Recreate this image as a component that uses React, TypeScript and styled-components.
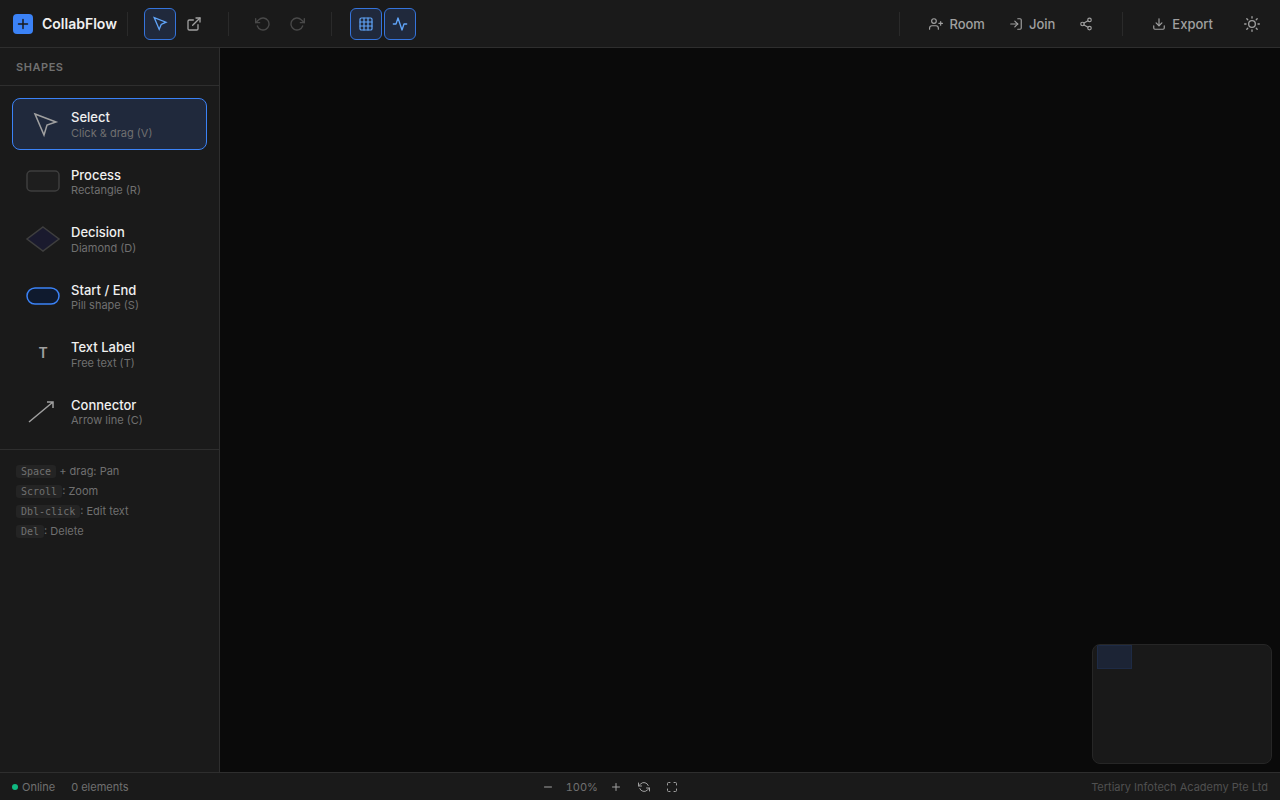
import React from 'react';
import styled, { createGlobalStyle } from 'styled-components';
import {
  FiActivity,
  FiDownload,
  FiExternalLink,
  FiLogIn,
  FiMaximize,
  FiMinus,
  FiPlus,
  FiRefreshCcw,
  FiRotateCcw,
  FiRotateCw,
  FiShare2,
  FiSun,
  FiUserPlus,
} from 'react-icons/fi';
import { Grid3x3 } from 'lucide-react';

const GlobalStyle = createGlobalStyle`
  *, *::before, *::after { box-sizing: border-box; }
  body {
    margin: 0;
    background: #0a0a0a;
    color: #f0f0f0;
    font-family: Inter, "Liberation Sans", sans-serif;
    font-size: 13px;
    line-height: 1.5;
  }
  button { font: inherit; cursor: pointer; }
  svg { display: block; flex: none; }
`;

const Page = styled.div`
  display: flex;
  flex-direction: column;
  height: 100vh;
`;

const Toolbar = styled.header`
  display: flex;
  align-items: center;
  justify-content: space-between;
  height: 48px;
  padding: 0 12px;
  background: #1a1a1a;
  border-bottom: 1px solid #2e2e2e;
`;

const ToolbarSide = styled.div`
  display: flex;
  align-items: center;
`;

const Brand = styled.div`
  display: flex;
  align-items: center;
  gap: 8px;
  margin-right: 10px;
  font-size: 14px;
  font-weight: 600;
`;

const Divider = styled.div<{ $gap?: number }>`
  width: 1px;
  height: 24px;
  margin-right: ${({ $gap = 18 }) => $gap}px;
  background: #2a2a2a;
`;

const ToolGroup = styled.div<{ $after?: number }>`
  display: flex;
  gap: 2px;
  margin-right: ${({ $after = 18 }) => $after}px;
`;

const ToolButton = styled.button<{ $active?: boolean; $wide?: boolean }>`
  display: flex;
  align-items: center;
  justify-content: center;
  gap: 6px;
  width: ${({ $wide }) => ($wide ? 'auto' : '32px')};
  height: 32px;
  padding: ${({ $wide }) => ($wide ? '0 10px' : '0')};
  border: 1px solid ${({ $active }) => ($active ? '#3574dc' : 'transparent')};
  border-radius: 6px;
  background: ${({ $active }) => ($active ? '#20293c' : 'transparent')};
  color: ${({ $active }) => ($active ? '#60a5fa' : '#a0a0a0')};
  font-weight: 500;
  line-height: 16px;

  &:disabled {
    opacity: 0.35;
    cursor: default;
  }
`;

const Body = styled.div`
  display: flex;
  flex: 1;
  min-height: 0;
`;

const Sidebar = styled.aside`
  flex: none;
  width: 220px;
  overflow: hidden;
  background: #1a1a1a;
  border-right: 1px solid #2e2e2e;
`;

const SidebarTitle = styled.h2`
  margin: 0;
  padding: 11px 16px 10px;
  border-bottom: 1px solid #2e2e2e;
  color: #707070;
  font-size: 11px;
  font-weight: 600;
  line-height: 16px;
  letter-spacing: 0.05em;
`;

const ShapeList = styled.div`
  display: flex;
  flex-direction: column;
  gap: 6px;
  padding: 12px;
`;

const ShapeButton = styled.button<{ $active?: boolean }>`
  display: flex;
  align-items: center;
  gap: 10px;
  padding: 10px 12px;
  border: 1px solid ${({ $active }) => ($active ? '#3b82f6' : 'transparent')};
  border-radius: 8px;
  background: ${({ $active }) => ($active ? '#20293c' : 'transparent')};
  color: #f0f0f0;
  text-align: left;
`;

const ShapeName = styled.span`
  display: block;
  font-weight: 500;
  line-height: 1.35;
`;

const ShapeHint = styled.span`
  display: block;
  color: #707070;
  font-size: 11px;
  line-height: 12px;
`;

const Shortcuts = styled.div`
  padding: 12px 16px;
  border-top: 1px solid #2e2e2e;
  color: #707070;
  font-size: 11px;
  line-height: 1.8;
`;

const Key = styled.kbd`
  padding: 1px 5px;
  border-radius: 3px;
  background: #242424;
  font-family: "DejaVu Sans Mono", monospace;
  font-size: 10px;
`;

const Canvas = styled.main`
  position: relative;
  flex: 1;
  background: #0a0a0a;
`;

const Minimap = styled.div`
  position: absolute;
  right: 8px;
  bottom: 8px;
  width: 180px;
  height: 120px;
  padding: 0 4px;
  overflow: hidden;
  border: 1px solid #262626;
  border-radius: 8px;
  background: #191919;
`;

const MinimapView = styled.div`
  width: 35px;
  height: 24px;
  border: 1px solid #1e2b45;
  background: #1c2435;
`;

const StatusBar = styled.footer`
  display: flex;
  align-items: center;
  justify-content: space-between;
  height: 28px;
  padding: 0 12px;
  background: #1a1a1a;
  border-top: 1px solid #2e2e2e;
  color: #707070;
  font-size: 11px;
  line-height: 16px;
`;

const StatusGroup = styled.div<{ $gap: number }>`
  display: flex;
  align-items: center;
  gap: ${({ $gap }) => $gap}px;
`;

const OnlineDot = styled.span`
  width: 6px;
  height: 6px;
  border-radius: 50%;
  background: #10b981;
`;

const ZoomButton = styled.button`
  display: flex;
  align-items: center;
  justify-content: center;
  width: 24px;
  height: 24px;
  padding: 0;
  border: 0;
  background: transparent;
  color: #a0a0a0;
`;

const ZoomLevel = styled.span`
  width: 36px;
  text-align: center;
  font-variant-numeric: tabular-nums;
`;

const Credit = styled.span`
  color: #505050;
`;

const LogoIcon = () => (
  <svg width="22" height="22" viewBox="0 0 22 22" fill="none">
    <rect x="1" y="1" width="20" height="20" rx="4" fill="#3b82f6" />
    <path d="M6.5 11h9M11 6.5v9" stroke="#1a1a1a" strokeWidth="1.5" strokeLinecap="round" />
  </svg>
);

const CursorIcon = () => (
  <svg width="16" height="16" viewBox="0 0 16 16" fill="none" stroke="currentColor" strokeWidth="1.3">
    <path d="M2.2 1.6L14 6.2 9.2 8.4 7.2 13.4z" />
  </svg>
);

const shapeArt = {
  select: <path d="M10 4l21 8-9 3-3 10z" stroke="#a0a0a0" strokeWidth="1.5" />,
  process: <rect x="2" y="4" width="32" height="20" rx="4" stroke="#3e3e3e" strokeWidth="1.5" fill="#1e1e1e" />,
  decision: <path d="M18 2l16 12-16 12L2 14z" stroke="#3e3e3e" strokeWidth="1.5" fill="#1a1a2e" />,
  terminal: <rect x="2" y="6" width="32" height="16" rx="8" stroke="#3b82f6" strokeWidth="1.5" fill="#0f1a2e" />,
  text: (
    <text x="18" y="18" textAnchor="middle" fontSize="14" fontWeight="600" fill="#a0a0a0">
      T
    </text>
  ),
  connector: <path d="M4 24L28 4M22 4h6v6" stroke="#a0a0a0" strokeWidth="1.5" />,
};

const shapes: { art: keyof typeof shapeArt; name: string; hint: string }[] = [
  { art: 'select', name: 'Select', hint: 'Click & drag (V)' },
  { art: 'process', name: 'Process', hint: 'Rectangle (R)' },
  { art: 'decision', name: 'Decision', hint: 'Diamond (D)' },
  { art: 'terminal', name: 'Start / End', hint: 'Pill shape (S)' },
  { art: 'text', name: 'Text Label', hint: 'Free text (T)' },
  { art: 'connector', name: 'Connector', hint: 'Arrow line (C)' },
];

export default function App() {
  return (
    <>
      <GlobalStyle />
      <Page>
        <Toolbar>
          <ToolbarSide>
            <Brand>
              <LogoIcon />
              CollabFlow
            </Brand>
            <Divider $gap={16} />
            <ToolGroup>
              <ToolButton $active aria-label="Select"><CursorIcon /></ToolButton>
              <ToolButton aria-label="Open"><FiExternalLink size={16} /></ToolButton>
            </ToolGroup>
            <Divider />
            <ToolGroup>
              <ToolButton disabled aria-label="Undo"><FiRotateCcw size={16} /></ToolButton>
              <ToolButton disabled aria-label="Redo"><FiRotateCw size={16} /></ToolButton>
            </ToolGroup>
            <Divider />
            <ToolGroup>
              <ToolButton $active aria-label="Toggle grid"><Grid3x3 size={16} strokeWidth={1.8} /></ToolButton>
              <ToolButton $active aria-label="Toggle snapping"><FiActivity size={16} /></ToolButton>
            </ToolGroup>
          </ToolbarSide>
          <ToolbarSide>
            <Divider />
            <ToolGroup>
              <ToolButton $wide><FiUserPlus size={14} />Room</ToolButton>
              <ToolButton $wide><FiLogIn size={14} />Join</ToolButton>
              <ToolButton $wide aria-label="Share"><FiShare2 size={14} /></ToolButton>
            </ToolGroup>
            <Divider />
            <ToolGroup $after={12}>
              <ToolButton $wide><FiDownload size={14} />Export</ToolButton>
            </ToolGroup>
            <ToolButton aria-label="Toggle theme"><FiSun size={16} /></ToolButton>
          </ToolbarSide>
        </Toolbar>
        <Body>
          <Sidebar>
            <SidebarTitle>SHAPES</SidebarTitle>
            <ShapeList>
              {shapes.map(({ art, name, hint }) => (
                <ShapeButton key={art} $active={art === 'select'}>
                  <svg width="36" height="28" viewBox="0 0 36 28" fill="none">{shapeArt[art]}</svg>
                  <span>
                    <ShapeName>{name}</ShapeName>
                    <ShapeHint>{hint}</ShapeHint>
                  </span>
                </ShapeButton>
              ))}
            </ShapeList>
            <Shortcuts>
              <div><Key>Space</Key> + drag: Pan</div>
              <div><Key>Scroll</Key>: Zoom</div>
              <div><Key>Dbl-click</Key>: Edit text</div>
              <div><Key>Del</Key>: Delete</div>
            </Shortcuts>
          </Sidebar>
          <Canvas>
            <Minimap><MinimapView /></Minimap>
          </Canvas>
        </Body>
        <StatusBar>
          <StatusGroup $gap={16}>
            <StatusGroup $gap={4}><OnlineDot />Online</StatusGroup>
            <span>0 elements</span>
          </StatusGroup>
          <StatusGroup $gap={4}>
            <ZoomButton aria-label="Zoom out"><FiMinus size={12} /></ZoomButton>
            <ZoomLevel>100%</ZoomLevel>
            <ZoomButton aria-label="Zoom in"><FiPlus size={12} /></ZoomButton>
            <ZoomButton aria-label="Reset view"><FiRefreshCcw size={12} /></ZoomButton>
            <ZoomButton aria-label="Fit to screen"><FiMaximize size={12} /></ZoomButton>
          </StatusGroup>
          <Credit>Tertiary Infotech Academy Pte Ltd</Credit>
        </StatusBar>
      </Page>
    </>
  );
}
